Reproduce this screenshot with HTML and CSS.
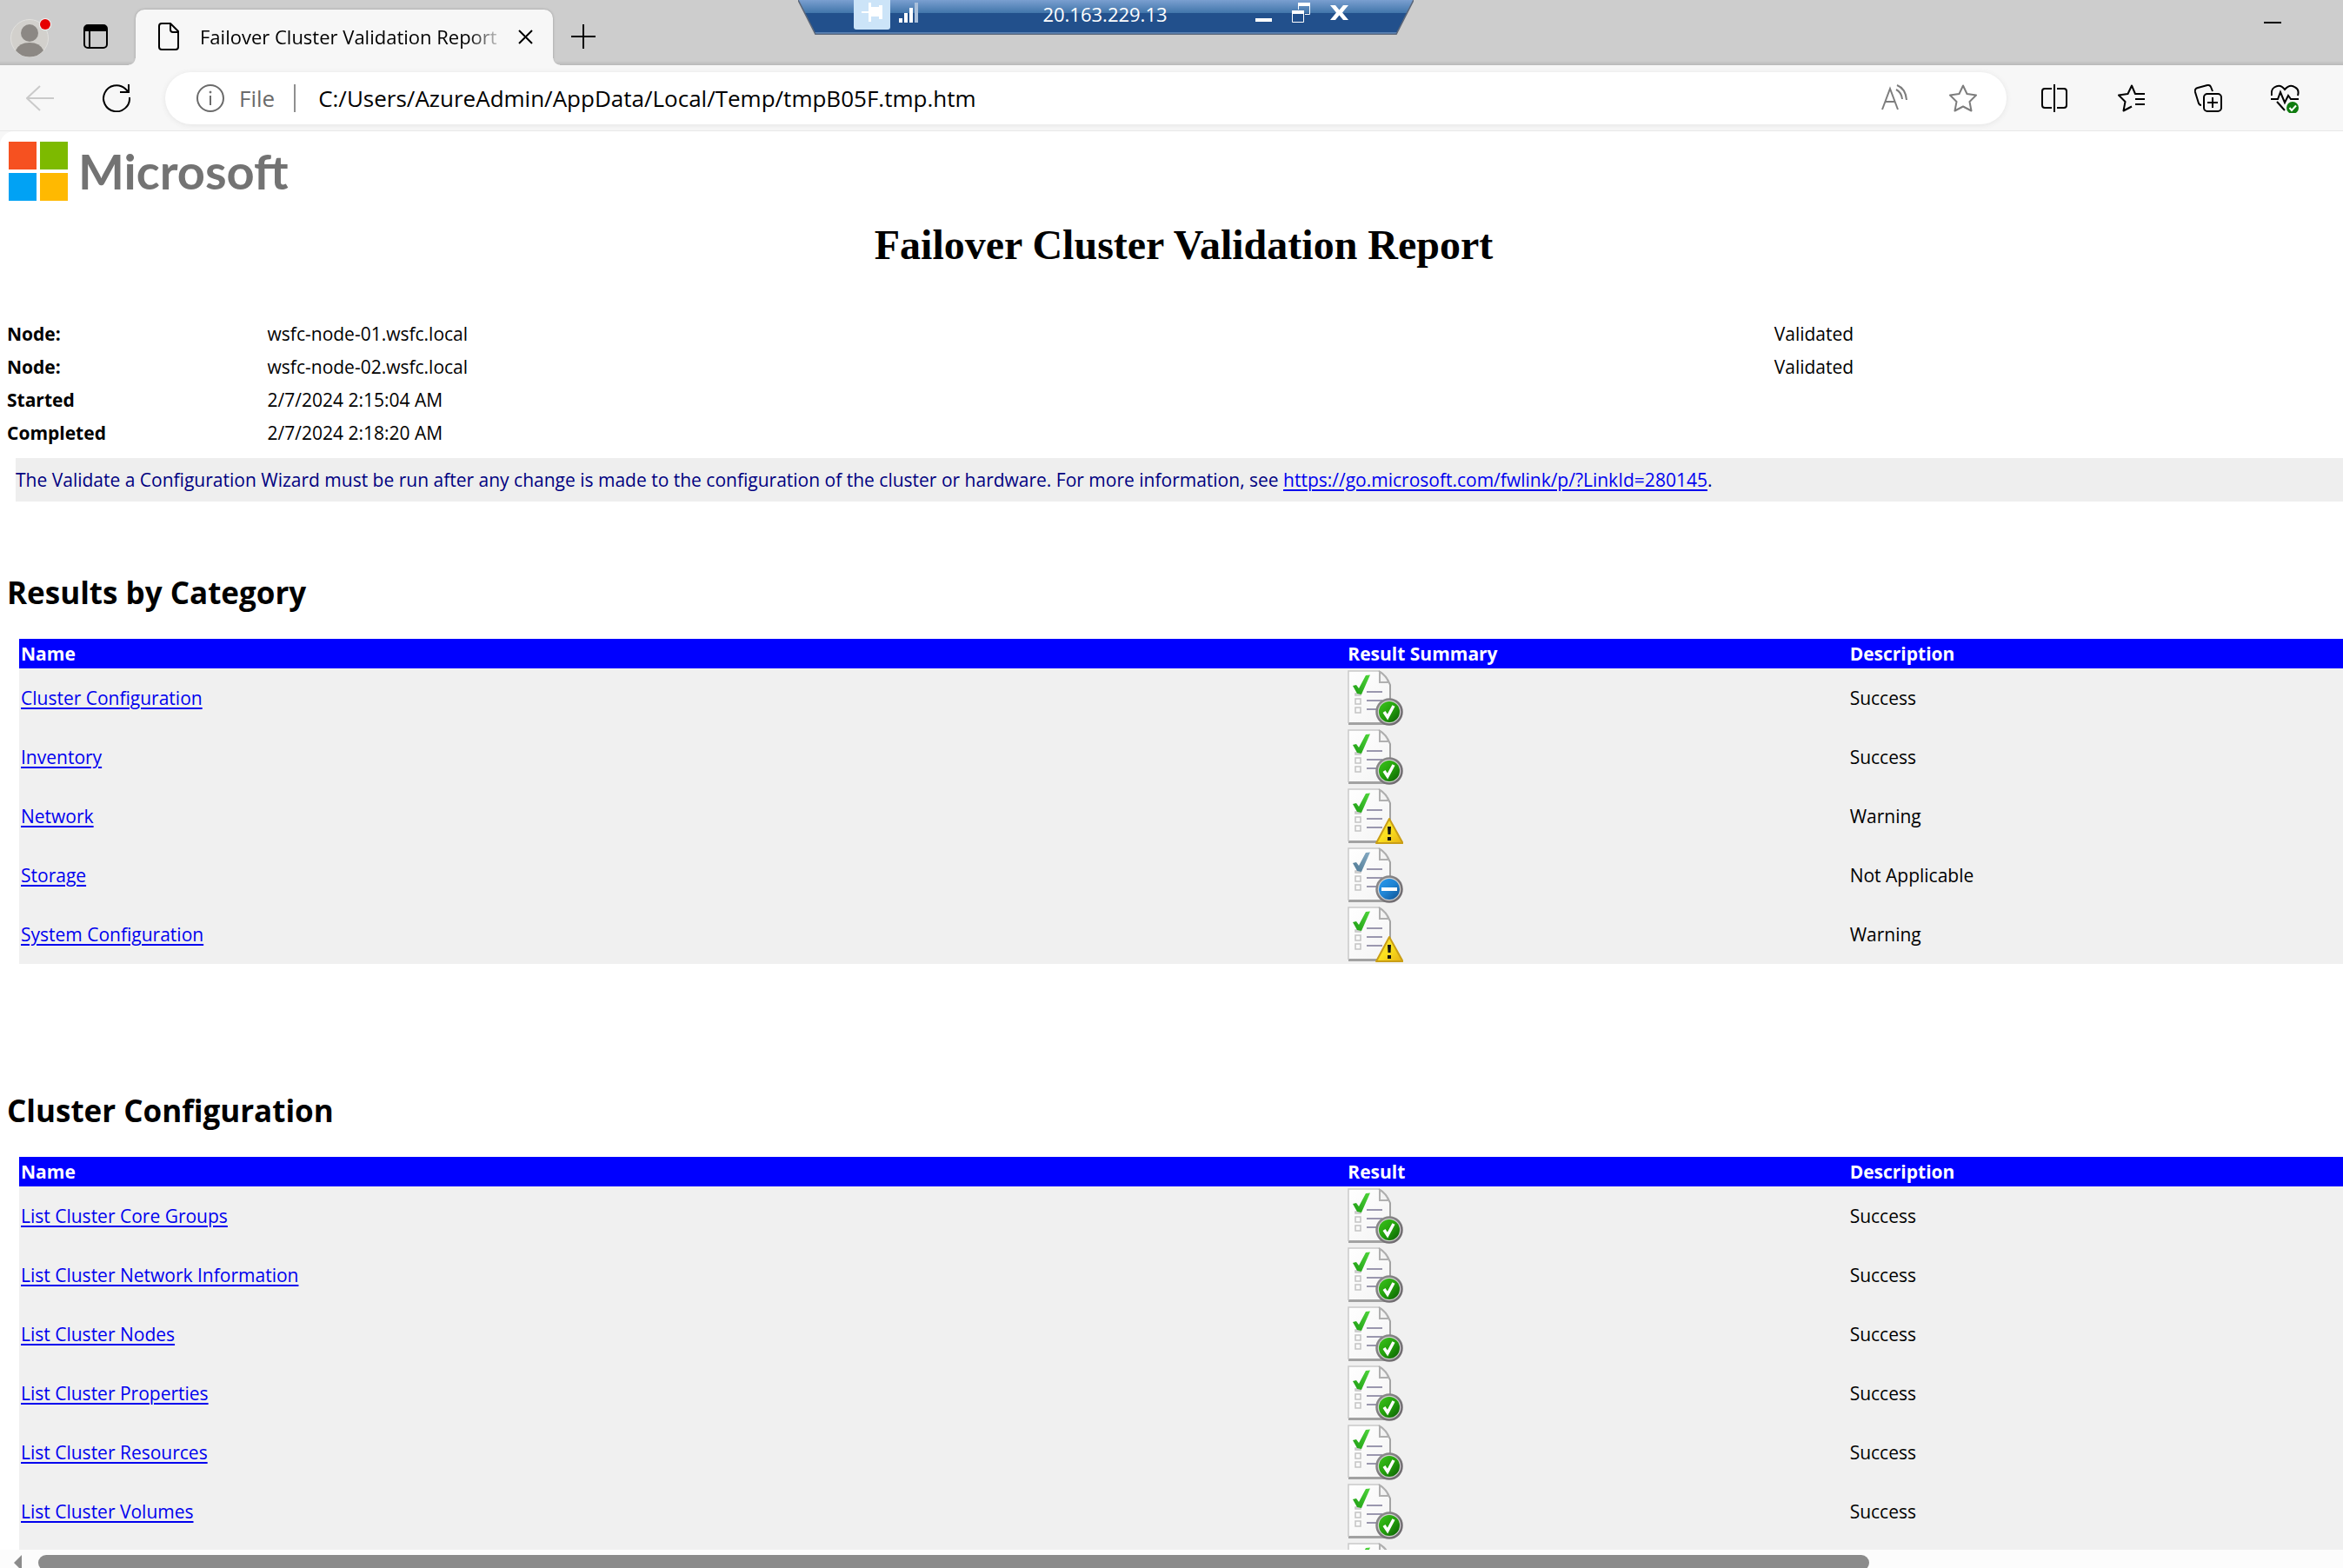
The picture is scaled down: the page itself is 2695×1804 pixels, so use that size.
FILE: index.html
```html
<!DOCTYPE html>
<html lang="en">
<head>
<meta charset="utf-8">
<title>Failover Cluster Validation Report</title>
<link rel="stylesheet" href="styles.css">
</head>
<body>
<svg class="sprite" aria-hidden="true">
  <defs>
    <linearGradient id="paper" x1="0" y1="0" x2="1" y2="1"><stop offset="0" stop-color="#ffffff"/><stop offset="1" stop-color="#f4f4f4"/></linearGradient>
    <linearGradient id="tick" x1="0" y1="1" x2="1" y2="0"><stop offset="0" stop-color="#1d9c12"/><stop offset="1" stop-color="#4fd63c"/></linearGradient>
    <linearGradient id="tick-blue" x1="0" y1="1" x2="1" y2="0"><stop offset="0" stop-color="#4e7893"/><stop offset="1" stop-color="#86abc4"/></linearGradient>
    <linearGradient id="green" x1="0" y1="0" x2="1" y2="1"><stop offset="0" stop-color="#3cc41c"/><stop offset=".5" stop-color="#23a00c"/><stop offset="1" stop-color="#0b5c04"/></linearGradient>
    <linearGradient id="blue" x1="0" y1="0" x2="1" y2="1"><stop offset="0" stop-color="#2a9bf0"/><stop offset=".5" stop-color="#1f83d2"/><stop offset="1" stop-color="#10508f"/></linearGradient>
    <linearGradient id="ring" x1="0" y1="0" x2="1" y2="1"><stop offset="0" stop-color="#8e8e8e"/><stop offset="1" stop-color="#6b666b"/></linearGradient>
    <linearGradient id="yellow" x1="0" y1="0" x2="1" y2="1"><stop offset="0" stop-color="#f5dc4a"/><stop offset=".5" stop-color="#fbe11f"/><stop offset="1" stop-color="#e6b013"/></linearGradient>
    <linearGradient id="rdp" x1="0" y1="0" x2="0" y2="1"><stop offset="0" stop-color="#7a9fd0"/><stop offset=".38" stop-color="#4276ab"/><stop offset=".38" stop-color="#22508c"/><stop offset="1" stop-color="#22508c"/></linearGradient>
    <symbol id="sheet" viewBox="0 0 64 64">
      <path d="M1 61.500H48.500" stroke="#a2a2a2" stroke-width="3"/>
      <path d="M1 1H36L49 17V60H1Z" fill="url(#paper)"/>
      <path d="M1 61V1H36" fill="none" stroke="#c9c9c9" stroke-width="1.500"/>
      <path d="M36 1Q45 6 49 17V60" fill="none" stroke="#a3a3a3" stroke-width="2"/>
      <path d="M37 2V14H47Q45 7 37 2Z" fill="#f3f3f3" stroke="#b0b0b0" stroke-width="2"/>
      <path d="M22 25H40M22 35H40M22 45H40" stroke="#9a97ae" stroke-width="2"/>
      <path d="M9 27H15V29H9ZM9 33H15V39H9ZM9 43H15V49H9Z" fill="#fafafa" stroke="#c4c4c4" stroke-width="1.500"/>
    </symbol>
    <symbol id="tickmark" viewBox="0 0 64 64"><path d="M6 18L10 17L13 21L21 6L26 5.500L16 28L11 27Z"/></symbol>
    <symbol id="success" viewBox="0 0 64 64">
      <use href="#sheet"/><use href="#tickmark" fill="url(#tick)"/>
      <circle cx="48" cy="48" r="14.500" fill="#d0d0d0" stroke="url(#ring)" stroke-width="2.500"/>
      <circle cx="48" cy="48" r="12" fill="url(#green)"/>
      <path d="M42 48L46 54L53 41" fill="none" stroke="#fff" stroke-width="3.500"/>
    </symbol>
    <symbol id="warning" viewBox="0 0 64 64">
      <use href="#sheet"/><use href="#tickmark" fill="url(#tick)"/>
      <path d="M48 35L63.500 63H33Z" fill="url(#yellow)" stroke="#c99e16" stroke-width="2" stroke-linejoin="round"/>
      <path d="M46 44H50L49.500 53H46.500ZM46 56H50V60H46Z" fill="#111"/>
    </symbol>
    <symbol id="skipped" viewBox="0 0 64 64">
      <use href="#sheet"/><use href="#tickmark" fill="url(#tick-blue)"/>
      <circle cx="48" cy="48" r="14.500" fill="#d0d0d0" stroke="url(#ring)" stroke-width="2.500"/>
      <circle cx="48" cy="48" r="12" fill="url(#blue)"/>
      <path d="M39 48H57" stroke="#fff" stroke-width="4"/>
    </symbol>
  </defs>
</svg>

<header class="chrome">
  <div class="tabstrip">
    <button class="ico" aria-label="Profile"><svg width="48" height="48" viewBox="0 0 48 48"><circle cx="22" cy="26" r="21.500" fill="#d2d0cc" stroke="#e2e1de"/><circle cx="22" cy="20" r="10" fill="#8c8884"/><path d="M6 40Q10 31 22 31T38 40Q32 47.500 22 47.500T6 40Z" fill="#8c8884"/><circle cx="40" cy="10" r="7" fill="#f3f3f3"/><circle cx="40" cy="10" r="6" fill="#e60000"/></svg></button>
    <button class="ico workspaces" aria-label="Tab actions"><svg width="28" height="28" viewBox="0 0 28 28"><rect x="1" y="1" width="26" height="26" rx="4" fill="none" stroke="#000" stroke-width="2"/><path d="M1 8V5Q1 1 5 1H23Q27 1 27 5V8Z"/><path d="M7 8V27" stroke="#000" stroke-width="2"/></svg></button>
    <div class="tab">
      <svg width="24" height="32" viewBox="0 0 24 32" fill="none" stroke="#000" stroke-width="2" stroke-linejoin="round"><path d="M4 1H14L23 10V28Q23 31 20 31H4Q1 31 1 28V4Q1 1 4 1ZM14 1V8Q14 11 17 11H23"/></svg>
      <span class="tab-title">Failover Cluster Validation Report</span>
      <button class="ico" aria-label="Close tab"><svg width="17" height="17" viewBox="0 0 17 17" stroke="#000" stroke-width="2"><path d="M1 1L16 16M16 1L1 16"/></svg></button>
    </div>
    <button class="ico newtab" aria-label="New tab"><svg width="28" height="28" viewBox="0 0 28 28" stroke="#000" stroke-width="2"><path d="M0 14H28M14 0V28"/></svg></button>
    <button class="ico minimize" aria-label="Minimize"><svg width="20" height="2" viewBox="0 0 20 2"><path d="M0 0H20V2H0Z"/></svg></button>
  </div>

  <div class="toolbar">
    <button class="ico" aria-label="Back"><svg width="32" height="32" viewBox="0 0 32 32" fill="none" stroke="#cacaca" stroke-width="2"><path d="M32 16H1M16 2L1 16L16 30"/></svg></button>
    <button class="ico reload" aria-label="Refresh"><svg width="32" height="32" viewBox="0 0 32 32" fill="none" stroke="#000" stroke-width="2"><path d="M31 15A15 15 0 1 1 26 5L30 9M30 0V9H20"/></svg></button>
    <div class="address">
      <svg width="32" height="32" viewBox="0 0 32 32" fill="none" stroke="#6b6b6b" stroke-width="2"><circle cx="16" cy="16" r="15"/><path d="M16 13V24"/><circle cx="16" cy="9" r="1" fill="#6b6b6b" stroke-width="1"/></svg>
      <label class="scheme" for="url">File</label>
      <input class="url" id="url" type="text" value="C:/Users/AzureAdmin/AppData/Local/Temp/tmpB05F.tmp.htm">
      <button class="ico" aria-label="Read aloud"><svg width="30" height="32" viewBox="0 0 30 32" fill="none" stroke="#7d7d7d" stroke-width="2"><path d="M1 29L10 5L19 29M4 20H16M17 6Q23 9 24 17M18 1Q28 5 29 18"/></svg></button>
      <button class="ico favorite" aria-label="Add to favorites"><svg width="32" height="32" viewBox="0 0 32 32" fill="none" stroke="#7d7d7d" stroke-width="2" stroke-linejoin="round"><path d="M16 1.500L20.500 11L31 12.500L23.500 20L25.500 30.500L16 25.500L6.500 30.500L8.500 20L1 12.500L11.500 11Z"/></svg></button>
    </div>
    <nav class="actions" aria-label="Browser tools">
      <button class="ico" aria-label="Split screen"><svg width="32" height="32" viewBox="0 0 32 32" fill="none" stroke="#000" stroke-width="2"><path d="M12 5H4Q1 5 1 8V24Q1 27 4 27H12M18 5H26Q29 5 29 8V24Q29 27 26 27H18M15 0V32"/></svg></button>
      <button class="ico" aria-label="Favorites"><svg width="32" height="32" viewBox="0 0 32 32" fill="none" stroke="#000" stroke-width="2" stroke-linejoin="round"><path d="M31 11H20L16 1.500L11.500 11L1 12.500L8.500 20L6.500 30.500L16 25.500M20 17H31M20 23H31"/></svg></button>
      <button class="ico" aria-label="Collections"><svg width="32" height="32" viewBox="0 0 32 32" fill="none" stroke="#000" stroke-width="2"><rect x="11" y="11" width="20" height="20" rx="4"/><path d="M21 15V27M15 21H27M21 8L19 3Q18 .5 15 1L4 4Q0 5 1 9L5 22Q6 24 8 24"/></svg></button>
      <button class="ico" aria-label="Browser essentials"><svg width="33" height="34" viewBox="0 0 33 34" fill="none" stroke="#000" stroke-width="2"><path d="M1 14Q0 7 4 4.500Q11 0 16 7Q22 0 28 4.500Q33 7 31 14M0 18H8L11 10L16 22L20 14L23 18H32M7 21L16 31"/><circle cx="25" cy="28" r="7" fill="#107c10" stroke="none"/><path d="M21.500 28L24 31L29 25.500" stroke="#fff"/></svg></button>
    </nav>
  </div>

  <div class="rdp">
    <svg class="rdp-shape" width="708" height="40" viewBox="0 0 708 40" aria-hidden="true"><path d="M0 0L20 39H688L708 0Z" fill="url(#rdp)"/><path d="M19 38H689" stroke="#8fb0d8"/><path d="M0 0L20 39.500H688L708 0" fill="none" stroke="#5a6577" stroke-width="1.500"/></svg>
    <button class="ico pin" aria-label="Pin"><svg width="24" height="22" viewBox="0 0 24 22" fill="#fff"><path d="M0 10H8V0H11V5H20V3H24V19H20V16H11V22H8V12H0Z"/></svg></button>
    <svg class="signal" width="22" height="23" viewBox="0 0 22 23" fill="#fff"><path d="M0 18H4V23H0ZM6 12H10V23H6ZM12 6H16V23H12Z"/><path d="M18 0H22V23H18Z" fill="#a9bfda"/></svg>
    <span class="host">20.163.229.13</span>
    <button class="ico" aria-label="Minimize session"><svg width="19" height="23" viewBox="0 0 19 23" fill="#fff"><path d="M0 18H19V22H0Z"/></svg></button>
    <button class="ico" aria-label="Restore session"><svg width="21" height="23" viewBox="0 0 21 23" fill="none" stroke="#fff"><path d="M7.500 8V.5H20.500V13.500H15" /><path d="M7 0H21V4H7ZM0 9H14V13H0Z" fill="#fff" stroke="none"/><path d="M.5 9.500H13.500V22.500H.5Z"/></svg></button>
    <button class="ico" aria-label="Close session"><svg width="21" height="23" viewBox="0 -3 21 23" fill="#fff"><path d="M0 0H6L10.500 5.500L15 0H21L14 8.500L21 17H15L10.500 11.500L6 17H0L7 8.500Z"/></svg></button>
  </div>
</header>

<main class="page">
  <div class="brand">
    <svg width="68" height="68" viewBox="0 0 68 68" aria-hidden="true"><path d="M0 0H32V32H0Z" fill="#f65120"/><path d="M36 0H68V32H36Z" fill="#7dba00"/><path d="M0 36H32V68H0Z" fill="#01a2f4"/><path d="M36 36H68V68H36Z" fill="#ffb901"/></svg>
    <span class="wordmark">Microsoft</span>
  </div>
  <h1>Failover Cluster Validation Report</h1>

  <table class="summary">
    <tbody>
      <tr><th scope="row">Node:</th><td>wsfc-node-01.wsfc.local</td><td>Validated</td></tr>
      <tr><th scope="row">Node:</th><td>wsfc-node-02.wsfc.local</td><td>Validated</td></tr>
      <tr><th scope="row">Started</th><td>2/7/2024 2:15:04 AM</td><td></td></tr>
      <tr><th scope="row">Completed</th><td>2/7/2024 2:18:20 AM</td><td></td></tr>
    </tbody>
  </table>

  <p class="note">The Validate a Configuration Wizard must be run after any change is made to the configuration of the cluster or hardware. For more information, see <a href="https://go.microsoft.com/fwlink/p/?LinkId=280145">https://go.microsoft.com/fwlink/p/?LinkId=280145</a>.</p>

  <section class="results">
    <h2>Results by Category</h2>
    <table class="grid">
      <thead><tr><th scope="col">Name</th><th scope="col">Result Summary</th><th scope="col">Description</th></tr></thead>
      <tbody>
        <tr><td><a href="#cluster">Cluster Configuration</a></td><td><svg class="status"><use href="#success"/></svg></td><td>Success</td></tr>
        <tr><td><a href="#inventory">Inventory</a></td><td><svg class="status"><use href="#success"/></svg></td><td>Success</td></tr>
        <tr><td><a href="#network">Network</a></td><td><svg class="status"><use href="#warning"/></svg></td><td>Warning</td></tr>
        <tr><td><a href="#storage">Storage</a></td><td><svg class="status"><use href="#skipped"/></svg></td><td>Not Applicable</td></tr>
        <tr><td><a href="#system">System Configuration</a></td><td><svg class="status"><use href="#warning"/></svg></td><td>Warning</td></tr>
      </tbody>
    </table>
  </section>

  <section class="results" id="cluster">
    <h2>Cluster Configuration</h2>
    <table class="grid">
      <thead><tr><th scope="col">Name</th><th scope="col">Result</th><th scope="col">Description</th></tr></thead>
      <tbody>
        <tr><td><a href="#groups">List Cluster Core Groups</a></td><td><svg class="status"><use href="#success"/></svg></td><td>Success</td></tr>
        <tr><td><a href="#networks">List Cluster Network Information</a></td><td><svg class="status"><use href="#success"/></svg></td><td>Success</td></tr>
        <tr><td><a href="#nodes">List Cluster Nodes</a></td><td><svg class="status"><use href="#success"/></svg></td><td>Success</td></tr>
        <tr><td><a href="#properties">List Cluster Properties</a></td><td><svg class="status"><use href="#success"/></svg></td><td>Success</td></tr>
        <tr><td><a href="#resources">List Cluster Resources</a></td><td><svg class="status"><use href="#success"/></svg></td><td>Success</td></tr>
        <tr><td><a href="#volumes">List Cluster Volumes</a></td><td><svg class="status"><use href="#success"/></svg></td><td>Success</td></tr>
        <tr><td></td><td><svg class="status"><use href="#success"/></svg></td><td></td></tr>
      </tbody>
    </table>
  </section>
</main>

<footer class="scrollbar" aria-hidden="true">
  <svg width="9" height="18" viewBox="0 0 9 18" fill="#8b8b8b"><path d="M9 0V18L0 9Z"/></svg>
  <div class="thumb"></div>
</footer>
</body>
</html>
```
FILE: styles.css
```css
* { box-sizing: border-box; }

body {
  margin: 0;
  height: 100vh;
  display: flex;
  flex-direction: column;
  overflow: hidden;
  background: #f7f7f7;
  color: #000;
  font-family: "Open Sans", "Noto Sans", sans-serif;
  font-size: 22px;
}

svg { display: block; flex: none; }
.sprite { position: absolute; width: 0; height: 0; }

.ico {
  flex: none;
  padding: 0;
  border: 0;
  background: none;
}

/* Browser chrome */
.chrome { position: relative; flex: none; }

.tabstrip {
  display: flex;
  align-items: center;
  height: 75px;
  padding: 11px 71px 0 12px;
  background: linear-gradient(#cdcdcd 70px, #b9b9b9);
}
.tabstrip > .ico { margin-bottom: 2px; }
.tabstrip .workspaces { margin-left: 36px; }
.tabstrip .newtab { margin-left: 21px; }
.tabstrip .minimize { margin: 0 0 34px auto; }

.tab {
  position: relative;
  display: flex;
  align-items: center;
  width: 480px;
  height: 64px;
  margin-left: 32px;
  padding: 0 23px 2px 26px;
  border-radius: 10px 10px 0 0;
  background: #f7f7f7;
  box-shadow: 0 0 3px #999;
  clip-path: inset(-4px -8px 0);
}
.tab::before,
.tab::after {
  content: "";
  position: absolute;
  bottom: 0;
  width: 8px;
  height: 8px;
}
.tab::before { right: 100%; background: radial-gradient(circle at 0 0, transparent 7px, #f7f7f7 8px); }
.tab::after { left: 100%; background: radial-gradient(circle at 100% 0, transparent 7px, #f7f7f7 8px); }
.tab-title {
  flex: 1;
  margin: 0 15px 0 24px;
  overflow: hidden;
  white-space: nowrap;
  -webkit-mask-image: linear-gradient(90deg, #000 88%, transparent);
  mask-image: linear-gradient(90deg, #000 88%, transparent);
}

.toolbar {
  display: flex;
  align-items: center;
  height: 76px;
  padding: 0 50px 0 30px;
  background: #f7f7f7;
  border-bottom: 1px solid #e8e8e8;
}
.toolbar .reload { margin-left: 56px; }
.address {
  flex: 1;
  display: flex;
  align-items: center;
  height: 60px;
  margin-left: 40px;
  padding: 0 34px 0 36px;
  border-radius: 30px;
  background: #fff;
  box-shadow: 0 1px 6px #e4e4e4;
}
.scheme {
  margin-left: 17px;
  padding-right: 22px;
  border-right: 2px solid #8f8f8f;
  color: #6b6b6b;
  font-size: 26px;
  line-height: 32px;
}
.url {
  flex: 1;
  min-width: 0;
  padding: 0 0 0 26px;
  border: 0;
  outline: 0;
  background: none;
  font: 26px "Open Sans", "Noto Sans", sans-serif;
}
.favorite { margin-left: 48px; }
.actions {
  display: flex;
  gap: 56px;
  margin-left: 40px;
}

/* Remote session bar, floating above the window */
.rdp {
  position: absolute;
  top: 0;
  left: 918px;
  display: flex;
  align-items: flex-start;
  width: 708px;
  height: 40px;
  padding: 0 75px 0 64px;
  color: #fff;
}
.rdp-shape { position: absolute; top: 0; left: 0; }
.rdp > * { z-index: 1; }
.rdp > .rdp-shape { z-index: 0; }
.pin {
  width: 42px;
  height: 34px;
  padding: 3px 9px 9px;
  border-radius: 0 0 3px 3px;
  background: #cce4f8;
}
.signal { margin: 3px 0 0 10px; }
.host {
  flex: 1;
  text-align: center;
  line-height: 32px;
  padding-left: 42px;
}
.rdp .ico + .ico { margin-left: 23px; }
.rdp .ico:not(.pin) { padding-top: 3px; }

/* Report */
.page {
  flex: 1;
  min-height: 0;
  overflow: hidden;
  padding: 12px 0 0 8px;
  border-radius: 16px 0 0 0;
  background: #fff;
  font-size: 21px;
}
.brand {
  display: flex;
  align-items: center;
  gap: 12px;
  height: 68px;
  padding-left: 2px;
}
.wordmark {
  color: #737373;
  font-family: Lato, "Open Sans", sans-serif;
  font-size: 56px;
  font-weight: 700;
  line-height: 68px;
}
h1 {
  margin: 23px 0 55px;
  padding-left: 20px;
  text-align: center;
  font: bold 48px/56px "Liberation Serif", serif;
}

table {
  table-layout: fixed;
  border-collapse: collapse;
}
th, td { padding: 0; text-align: left; }

.summary { width: 100%; }
.summary th, .summary td { height: 38px; line-height: 38px; }
.summary th { width: 11.150%; }
.summary td:nth-child(2) { width: 64.500%; }

.note {
  margin: 10px 0 81px 10px;
  background: #eee;
  color: #000080;
  line-height: 50px;
  white-space: nowrap;
}
a {
  color: #0000ee;
  text-decoration-thickness: 2px;
  text-underline-offset: 3px;
}

.results { margin-bottom: 145px; }
h2 {
  margin: 0 0 29px;
  font-size: 35px;
  line-height: 48px;
}
.grid {
  width: calc(100% - 14px);
  margin-left: 14px;
  background: #f0f0f0;
}
.grid th {
  height: 34px;
  line-height: 34px;
  background: #0000ff;
  color: #fff;
}
.grid th:nth-child(1) { width: 57.100%; }
.grid th:nth-child(2) { width: 21.600%; }
.grid th, .grid td { padding-left: 2px; }
.grid td { height: 68px; }
.status { width: 64px; height: 64px; }

.scrollbar {
  flex: none;
  display: flex;
  height: 21px;
  padding: 6px 0 0 16px;
  overflow: hidden;
  background: #fcfcfc;
}
.thumb {
  width: 78.600%;
  height: 18px;
  margin-left: 19px;
  border-radius: 9px;
  background: #8b8b8b;
}
```
